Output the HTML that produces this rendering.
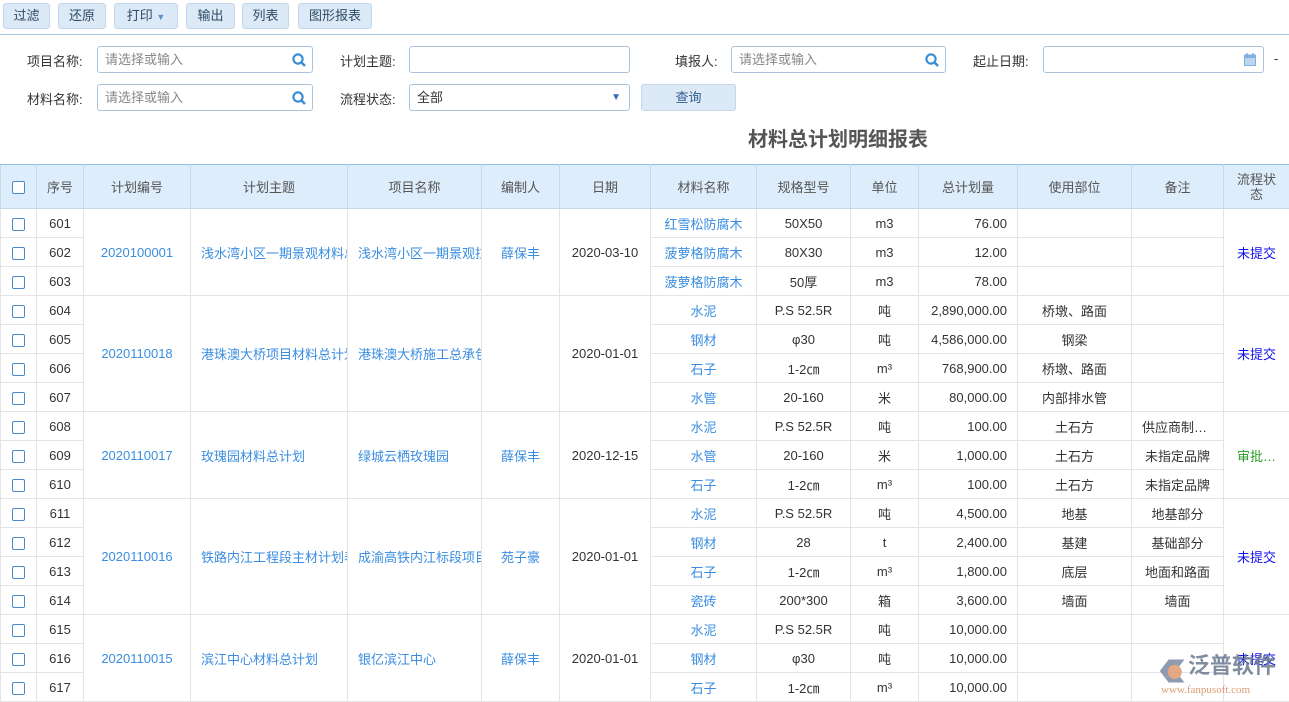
<!DOCTYPE html>
<html><head><meta charset="utf-8"><style>
*{box-sizing:border-box;margin:0;padding:0}
body{width:1289px;height:700px;overflow:hidden;background:#fff;font-family:"Liberation Sans","Noto Sans CJK SC",sans-serif;font-size:13px;color:#333;position:relative}
.tb{position:absolute;top:0;left:0;right:0;height:35px;border-bottom:1px solid #a9c4dc}
.btn{position:absolute;top:3px;height:26px;background:#dceaf7;border:1px solid #c3d6ea;border-radius:3px;color:#2f4a66;font-size:13px;line-height:24px;text-align:center}
.lbl{position:absolute;font-size:13px;color:#333}
.inp{position:absolute;height:27px;border:1px solid #a9c4dc;border-radius:3px;background:#fff;color:#888;font-size:13px;line-height:25px;padding-left:7px}
.q{position:absolute;right:5px;top:5px}
h1{position:absolute;left:748px;top:123px;font-size:20px;font-weight:bold;color:#555}
table{position:absolute;left:0;top:164px;border-collapse:collapse;table-layout:fixed;width:1289px}
th{background:#deedfb;color:#555;font-weight:normal;height:44px;border:1px solid #c6d8ea;border-top:1px solid #8cc0ec;font-size:13px}
td{height:29px;border:1px solid #e4e4e4;text-align:center;white-space:nowrap;overflow:hidden;font-size:13px}
.b{color:#3a8de0}
.r{text-align:right;padding-right:10px}
.st{color:#1010ee}
.cb{display:inline-block;width:13px;height:13px;border:1px solid #4a8ac9;border-radius:2px;vertical-align:middle;background:#fff}
.l{text-align:left;padding-left:10px}
</style></head><body>
<div class="tb">
<div class="btn" style="left:3px;width:47px">过滤</div>
<div class="btn" style="left:58px;width:48px">还原</div>
<div class="btn" style="left:114px;width:64px">打印 <span style="color:#5b8dc8;font-size:9px">▼</span></div>
<div class="btn" style="left:186px;width:49px">输出</div>
<div class="btn" style="left:242px;width:47px">列表</div>
<div class="btn" style="left:298px;width:74px">图形报表</div>
</div>
<div class="lbl" style="left:27px;top:51px">项目名称:</div>
<div class="inp" style="left:97px;top:46px;width:216px">请选择或输入<svg class="q" width="16" height="16" viewBox="0 0 16 16"><circle cx="7" cy="7" r="4.6" fill="none" stroke="#3c8fd6" stroke-width="2.2"/><path d="M10.5 10.5L14 14" stroke="#3c8fd6" stroke-width="2.6"/></svg></div>
<div class="lbl" style="left:340px;top:51px">计划主题:</div>
<div class="inp" style="left:409px;top:46px;width:221px"></div>
<div class="lbl" style="left:675px;top:51px">填报人:</div>
<div class="inp" style="left:731px;top:46px;width:215px">请选择或输入<svg class="q" width="16" height="16" viewBox="0 0 16 16"><circle cx="7" cy="7" r="4.6" fill="none" stroke="#3c8fd6" stroke-width="2.2"/><path d="M10.5 10.5L14 14" stroke="#3c8fd6" stroke-width="2.6"/></svg></div>
<div class="lbl" style="left:973px;top:51px">起止日期:</div>
<div class="inp" style="left:1043px;top:46px;width:221px"><svg class="q" style="top:6px;right:7px" width="12" height="13" viewBox="0 0 12 13"><rect x="0.5" y="2" width="11" height="10.5" fill="#bcd6f0" stroke="#7fb0e0"/><rect x="0.5" y="2" width="11" height="3" fill="#7fb0e0"/><path d="M3 0v3M9 0v3" stroke="#7fb0e0" stroke-width="1.4"/></svg></div>
<div class="lbl" style="left:1274px;top:51px">-</div>
<div class="lbl" style="left:27px;top:89px">材料名称:</div>
<div class="inp" style="left:97px;top:84px;width:216px">请选择或输入<svg class="q" width="16" height="16" viewBox="0 0 16 16"><circle cx="7" cy="7" r="4.6" fill="none" stroke="#3c8fd6" stroke-width="2.2"/><path d="M10.5 10.5L14 14" stroke="#3c8fd6" stroke-width="2.6"/></svg></div>
<div class="lbl" style="left:340px;top:89px">流程状态:</div>
<div class="inp" style="left:409px;top:84px;width:221px;color:#333">全部<span style="position:absolute;right:8px;top:0;color:#2f6fb5;font-size:10px">▼</span></div>
<div class="btn" style="left:641px;top:84px;width:95px;height:27px;line-height:25px;color:#2f5d8e">查询</div>
<h1>材料总计划明细报表</h1>
<table>
<colgroup><col style="width:36px"><col style="width:47px"><col style="width:107px"><col style="width:157px"><col style="width:134px"><col style="width:78px"><col style="width:91px"><col style="width:106px"><col style="width:94px"><col style="width:68px"><col style="width:99px"><col style="width:114px"><col style="width:92px"><col style="width:66px"></colgroup>
<tr><th><span class="cb"></span></th><th>序号</th><th>计划编号</th><th>计划主题</th><th>项目名称</th><th>编制人</th><th>日期</th><th>材料名称</th><th>规格型号</th><th>单位</th><th>总计划量</th><th>使用部位</th><th>备注</th><th style="line-height:15px">流程状<br>态</th></tr>
<tr><td><span class="cb"></span></td><td>601</td><td rowspan="3" class="b">2020100001</td><td rowspan="3" class="b l">浅水湾小区一期景观材料总计划</td><td rowspan="3" class="b l">浅水湾小区一期景观拉拉</td><td rowspan="3" class="b">薛保丰</td><td rowspan="3">2020-03-10</td><td class="b">红雪松防腐木</td><td>50X50</td><td>m3</td><td class="r">76.00</td><td></td><td></td><td rowspan="3" class="st">未提交</td></tr>
<tr><td><span class="cb"></span></td><td>602</td><td class="b">菠萝格防腐木</td><td>80X30</td><td>m3</td><td class="r">12.00</td><td></td><td></td></tr>
<tr><td><span class="cb"></span></td><td>603</td><td class="b">菠萝格防腐木</td><td>50厚</td><td>m3</td><td class="r">78.00</td><td></td><td></td></tr>
<tr><td><span class="cb"></span></td><td>604</td><td rowspan="4" class="b">2020110018</td><td rowspan="4" class="b l">港珠澳大桥项目材料总计划</td><td rowspan="4" class="b l">港珠澳大桥施工总承包</td><td rowspan="4"></td><td rowspan="4">2020-01-01</td><td class="b">水泥</td><td>P.S 52.5R</td><td>吨</td><td class="r">2,890,000.00</td><td>桥墩、路面</td><td></td><td rowspan="4" class="st">未提交</td></tr>
<tr><td><span class="cb"></span></td><td>605</td><td class="b">钢材</td><td>φ30</td><td>吨</td><td class="r">4,586,000.00</td><td>钢梁</td><td></td></tr>
<tr><td><span class="cb"></span></td><td>606</td><td class="b">石子</td><td>1-2㎝</td><td>m³</td><td class="r">768,900.00</td><td>桥墩、路面</td><td></td></tr>
<tr><td><span class="cb"></span></td><td>607</td><td class="b">水管</td><td>20-160</td><td>米</td><td class="r">80,000.00</td><td>内部排水管</td><td></td></tr>
<tr><td><span class="cb"></span></td><td>608</td><td rowspan="3" class="b">2020110017</td><td rowspan="3" class="b l">玫瑰园材料总计划</td><td rowspan="3" class="b l">绿城云栖玫瑰园</td><td rowspan="3" class="b">薛保丰</td><td rowspan="3">2020-12-15</td><td class="b">水泥</td><td>P.S 52.5R</td><td>吨</td><td class="r">100.00</td><td>土石方</td><td class="l">供应商制…</td><td rowspan="3" style="color:#2a9a2a">审批…</td></tr>
<tr><td><span class="cb"></span></td><td>609</td><td class="b">水管</td><td>20-160</td><td>米</td><td class="r">1,000.00</td><td>土石方</td><td>未指定品牌</td></tr>
<tr><td><span class="cb"></span></td><td>610</td><td class="b">石子</td><td>1-2㎝</td><td>m³</td><td class="r">100.00</td><td>土石方</td><td>未指定品牌</td></tr>
<tr><td><span class="cb"></span></td><td>611</td><td rowspan="4" class="b">2020110016</td><td rowspan="4" class="b l">铁路内江工程段主材计划表</td><td rowspan="4" class="b l">成渝高铁内江标段项目</td><td rowspan="4" class="b">苑子豪</td><td rowspan="4">2020-01-01</td><td class="b">水泥</td><td>P.S 52.5R</td><td>吨</td><td class="r">4,500.00</td><td>地基</td><td>地基部分</td><td rowspan="4" class="st">未提交</td></tr>
<tr><td><span class="cb"></span></td><td>612</td><td class="b">钢材</td><td>28</td><td>t</td><td class="r">2,400.00</td><td>基建</td><td>基础部分</td></tr>
<tr><td><span class="cb"></span></td><td>613</td><td class="b">石子</td><td>1-2㎝</td><td>m³</td><td class="r">1,800.00</td><td>底层</td><td>地面和路面</td></tr>
<tr><td><span class="cb"></span></td><td>614</td><td class="b">瓷砖</td><td>200*300</td><td>箱</td><td class="r">3,600.00</td><td>墙面</td><td>墙面</td></tr>
<tr><td><span class="cb"></span></td><td>615</td><td rowspan="3" class="b">2020110015</td><td rowspan="3" class="b l">滨江中心材料总计划</td><td rowspan="3" class="b l">银亿滨江中心</td><td rowspan="3" class="b">薛保丰</td><td rowspan="3">2020-01-01</td><td class="b">水泥</td><td>P.S 52.5R</td><td>吨</td><td class="r">10,000.00</td><td></td><td></td><td rowspan="3" class="st">未提交</td></tr>
<tr><td><span class="cb"></span></td><td>616</td><td class="b">钢材</td><td>φ30</td><td>吨</td><td class="r">10,000.00</td><td></td><td></td></tr>
<tr><td><span class="cb"></span></td><td>617</td><td class="b">石子</td><td>1-2㎝</td><td>m³</td><td class="r">10,000.00</td><td></td><td></td></tr>
</table>
<div style="position:absolute;left:1158px;top:653px;width:131px;height:47px;opacity:.85;white-space:nowrap">
<svg width="30" height="28" style="position:absolute;left:0;top:4px" viewBox="0 0 34 30"><path d="M2 15L12 2h18L20 15l10 13H12z" fill="#7c8aa3"/><circle cx="19" cy="16" r="8" fill="#e09a70"/></svg>
<div style="position:absolute;left:30px;top:0px;font-size:22px;line-height:26px;color:#6a7890;font-weight:bold">泛普软件</div>
<div style="position:absolute;left:3px;top:31px;font-size:11px;color:#d88a5c;font-family:'Liberation Serif',serif">www.fanpusoft.com</div>
</div>
</body></html>
